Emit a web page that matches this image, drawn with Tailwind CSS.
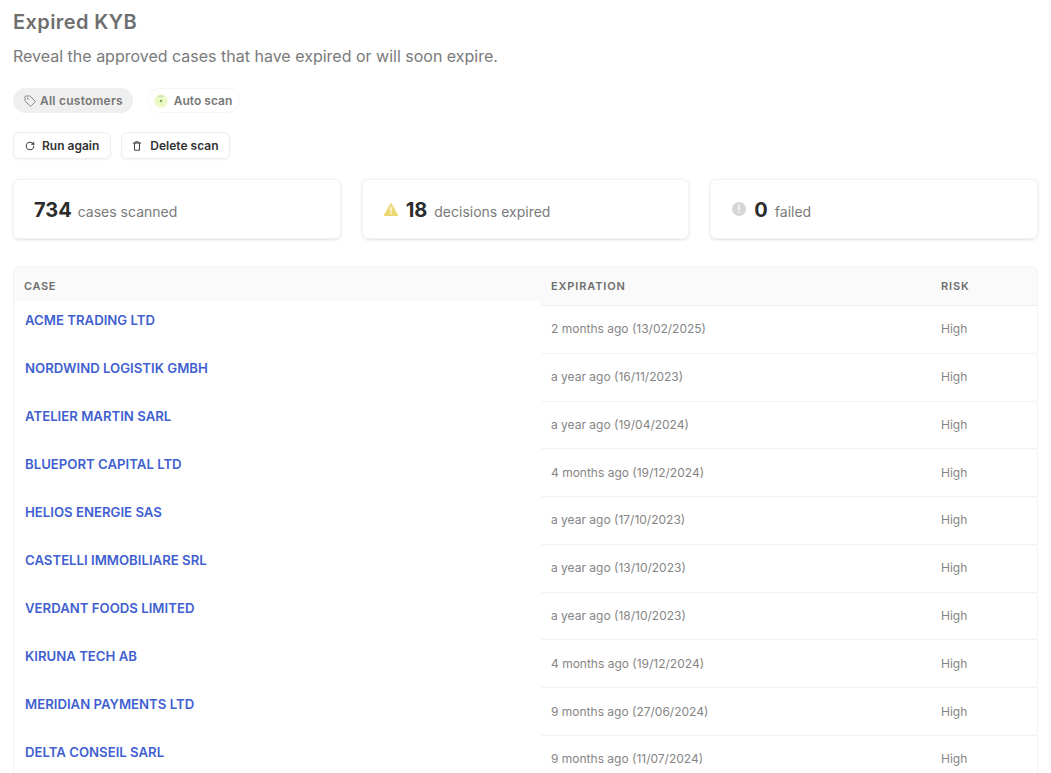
<!DOCTYPE html>
<html lang="en">
  <head>
    <meta charset="UTF-8" />
    <title>Expired KYB</title>
    <script src="https://cdn.jsdelivr.net/npm/@tailwindcss/browser@4"></script>
  </head>
  <body class="bg-white font-['Inter',sans-serif] h-[773px] overflow-hidden">
    <main class="pl-[13px] pr-[13px]">
      <!-- Header -->
      <h1 class="pt-[10px] text-[20px] leading-[24px] font-semibold tracking-[0.02em] text-[#6e6e6e]">Expired KYB</h1>
      <p class="mt-[12px] text-[16px] leading-[20px] text-[#7a7a7a]">Reveal the approved cases that have expired or will soon expire.</p>

      <!-- Tags -->
      <div class="mt-[22px] flex items-center gap-[14px] h-[25px]">
        <span class="flex items-center gap-[4px] h-[25px] pl-[11px] pr-[10px] rounded-full bg-[#efefef] text-[12px] font-semibold tracking-[0.02em] text-[#777]">
          <svg class="w-[12px] h-[12px]" viewBox="0 0 24 24" fill="none" stroke="#888" stroke-width="2" stroke-linecap="round" stroke-linejoin="round"><path d="M12.6 2.6A2 2 0 0 0 11.2 2H4a2 2 0 0 0-2 2v7.2a2 2 0 0 0 .6 1.4l8.7 8.7a2.4 2.4 0 0 0 3.4 0l6.6-6.6a2.4 2.4 0 0 0 0-3.4z"/><circle cx="7.5" cy="7.5" r=".5" fill="#888"/></svg>
          All customers
        </span>
        <span class="flex items-center gap-[6px] h-[25px] pl-[6px] pr-[7px] rounded-full border border-[#f6f6f6] text-[12px] font-semibold text-[#777]">
          <span class="w-[14px] h-[14px] rounded-full bg-[radial-gradient(circle,#e4f6b4_0%,#f0fad0_60%,#ffffff_100%)] flex items-center justify-center">
            <svg class="w-[12px] h-[12px]" viewBox="0 0 12 12" fill="none"><path d="M3.5 1.5 Q6 0.2 8 1.5" stroke="#a5d6a0" stroke-width="1"/><circle cx="6" cy="6" r="1" fill="#4c8a55"/></svg>
          </span>
          Auto scan
        </span>
      </div>

      <!-- Actions -->
      <div class="mt-[19px] flex gap-[10px]">
        <button class="flex items-center gap-[7px] h-[27px] pl-[11px] pr-[11px] rounded-[6px] border border-[#eeeeee] bg-white shadow-[0_1px_2px_rgba(0,0,0,0.05)] text-[12px] font-semibold text-[#333]">
          <svg class="w-[10px] h-[10px]" viewBox="0 0 24 24" fill="none" stroke="#444" stroke-width="2.5" stroke-linecap="round" stroke-linejoin="round"><path d="M21 12a9 9 0 1 1-9-9c2.5 0 4.8 1 6.5 2.5L21 8"/><path d="M21 3v5h-5"/></svg>
          Run again
        </button>
        <button class="flex items-center gap-[8px] h-[27px] pl-[10px] pr-[11px] rounded-[6px] border border-[#eeeeee] bg-white shadow-[0_1px_2px_rgba(0,0,0,0.05)] text-[12px] font-semibold text-[#333]">
          <svg class="w-[10px] h-[10px]" viewBox="0 0 24 24" fill="none" stroke="#444" stroke-width="2.5" stroke-linecap="round" stroke-linejoin="round"><path d="M3 5h18"/><path d="M6 5v16a1 1 0 0 0 1 1h10a1 1 0 0 0 1-1V5"/><path d="M9 5V2h6v3"/></svg>
          Delete scan
        </button>
      </div>

      <!-- Stats -->
      <div class="mt-[20px] grid grid-cols-3 gap-[21px]">
        <div class="h-[60px] pt-[2px] flex items-center gap-[6px] pl-[20px] rounded-[6px] border border-[#f3f3f3] shadow-[0_1px_3px_rgba(0,0,0,0.12)]">
          <span class="text-[20px] font-bold text-[#2c2c2c]">734</span>
          <span class="mt-[2px] text-[14px] text-[#7a7a7a]">cases scanned</span>
        </div>
        <div class="h-[60px] pt-[2px] flex items-center pl-[20px] rounded-[6px] border border-[#f3f3f3] shadow-[0_1px_3px_rgba(0,0,0,0.12)]">
          <svg class="w-[16px] h-[14px] mr-[7px] -mt-[2px]" viewBox="0 0 16 14"><path d="M8 0.5 L15.6 14 H0.4 Z" fill="#ecd873"/><rect x="7.3" y="5" width="1.4" height="4.5" fill="#fff"/><rect x="7.3" y="10.5" width="1.4" height="1.5" fill="#fff"/></svg>
          <span class="text-[20px] font-bold text-[#2c2c2c]">18</span>
          <span class="ml-[7px] mt-[2px] text-[14px] text-[#7a7a7a]">decisions expired</span>
        </div>
        <div class="h-[60px] pt-[2px] flex items-center pl-[21px] rounded-[6px] border border-[#f3f3f3] shadow-[0_1px_3px_rgba(0,0,0,0.12)]">
          <svg class="w-[14px] h-[14px] mr-[8px] -mt-[2px]" viewBox="0 0 14 14"><circle cx="7" cy="7" r="7" fill="#d6d6d6"/><rect x="6.3" y="3" width="1.4" height="5" fill="#fff"/><rect x="6.3" y="9.2" width="1.4" height="1.6" fill="#fff"/></svg>
          <span class="text-[20px] font-bold text-[#2c2c2c]">0</span>
          <span class="ml-[7px] mt-[2px] text-[14px] text-[#7a7a7a]">failed</span>
        </div>
      </div>

      <!-- Table -->
      <div class="mt-[27px] flex rounded-t-[6px] border border-[#f3f3f3] border-b-0 bg-[#fafafa]">
        <div class="w-[527px] shrink-0">
          <div class="h-[34px] pl-[10px] pt-[10px] text-[11px] leading-[18px] font-semibold tracking-[0.06em] text-[#6e6e6e]">CASE</div>
          <div class="bg-white text-[13.2px] font-semibold text-[#3f5fd0]">
            <div class="h-[48px] pl-[11px] pt-[9px] leading-[20px]">ACME TRADING LTD</div>
            <div class="h-[48px] pl-[11px] pt-[9px] leading-[20px]">NORDWIND LOGISTIK GMBH</div>
            <div class="h-[48px] pl-[11px] pt-[9px] leading-[20px]">ATELIER MARTIN SARL</div>
            <div class="h-[48px] pl-[11px] pt-[9px] leading-[20px]">BLUEPORT CAPITAL LTD</div>
            <div class="h-[48px] pl-[11px] pt-[9px] leading-[20px]">HELIOS ENERGIE SAS</div>
            <div class="h-[48px] pl-[11px] pt-[9px] leading-[20px]">CASTELLI IMMOBILIARE SRL</div>
            <div class="h-[48px] pl-[11px] pt-[9px] leading-[20px]">VERDANT FOODS LIMITED</div>
            <div class="h-[48px] pl-[11px] pt-[9px] leading-[20px]">KIRUNA TECH AB</div>
            <div class="h-[48px] pl-[11px] pt-[9px] leading-[20px]">MERIDIAN PAYMENTS LTD</div>
            <div class="h-[48px] pl-[11px] pt-[9px] leading-[20px]">DELTA CONSEIL SARL</div>
          </div>
        </div>
        <div class="flex-1 min-w-0">
          <div class="grid grid-cols-[390px_1fr] h-[39px] pl-[10px] pt-[10px] border-b border-[#eeeeee] text-[11px] leading-[18px] font-semibold tracking-[0.08em] text-[#6e6e6e]">
            <span>EXPIRATION</span><span>RISK</span>
          </div>
          <div class="bg-white text-[12px] text-[#858585]">
            <div class="grid grid-cols-[390px_1fr] items-center h-[47.78px] pl-[10px] border-b border-[#f3f3f3]"><span>2 months ago (13/02/2025)</span><span>High</span></div>
            <div class="grid grid-cols-[390px_1fr] items-center h-[47.78px] pl-[10px] border-b border-[#f3f3f3]"><span>a year ago (16/11/2023)</span><span>High</span></div>
            <div class="grid grid-cols-[390px_1fr] items-center h-[47.78px] pl-[10px] border-b border-[#f3f3f3]"><span>a year ago (19/04/2024)</span><span>High</span></div>
            <div class="grid grid-cols-[390px_1fr] items-center h-[47.78px] pl-[10px] border-b border-[#f3f3f3]"><span>4 months ago (19/12/2024)</span><span>High</span></div>
            <div class="grid grid-cols-[390px_1fr] items-center h-[47.78px] pl-[10px] border-b border-[#f3f3f3]"><span>a year ago (17/10/2023)</span><span>High</span></div>
            <div class="grid grid-cols-[390px_1fr] items-center h-[47.78px] pl-[10px] border-b border-[#f3f3f3]"><span>a year ago (13/10/2023)</span><span>High</span></div>
            <div class="grid grid-cols-[390px_1fr] items-center h-[47.78px] pl-[10px] border-b border-[#f3f3f3]"><span>a year ago (18/10/2023)</span><span>High</span></div>
            <div class="grid grid-cols-[390px_1fr] items-center h-[47.78px] pl-[10px] border-b border-[#f3f3f3]"><span>4 months ago (19/12/2024)</span><span>High</span></div>
            <div class="grid grid-cols-[390px_1fr] items-center h-[47.78px] pl-[10px] border-b border-[#f3f3f3]"><span>9 months ago (27/06/2024)</span><span>High</span></div>
            <div class="grid grid-cols-[390px_1fr] items-center h-[47.78px] pl-[10px] border-b border-[#f3f3f3]"><span>9 months ago (11/07/2024)</span><span>High</span></div>
          </div>
        </div>
      </div>
    </main>
  </body>
</html>
